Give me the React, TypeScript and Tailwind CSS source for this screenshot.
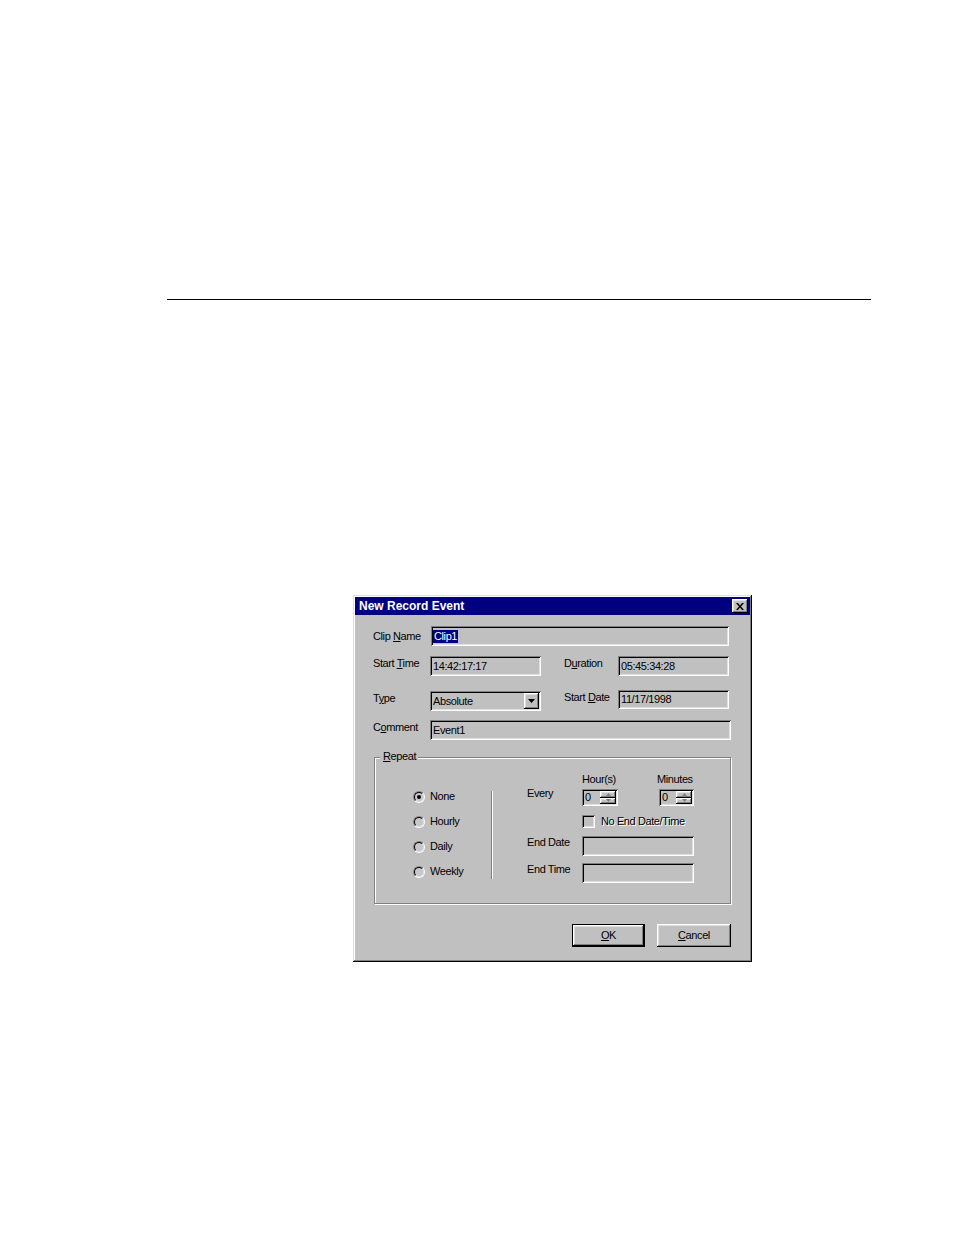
import React from "react";

const raised =
  "shadow-[inset_-1px_-1px_#000,inset_1px_1px_#fff,inset_-2px_-2px_#808080,inset_2px_2px_#dfdfdf]";
const sunken =
  "shadow-[inset_1px_1px_#808080,inset_-1px_-1px_#fff,inset_2px_2px_#000,inset_-2px_-2px_#dfdfdf]";
const lbl = "text-[11px] leading-[13px] tracking-[-0.4px] text-black whitespace-nowrap";

function Field({ className = "", children }: { className?: string; children?: React.ReactNode }) {
  return (
    <div className={`bg-[#c0c0c0] ${sunken} flex items-center pl-[3px] ${className}`}>
      <span className={lbl}>{children}</span>
    </div>
  );
}

function Radio({ checked, label }: { checked?: boolean; label: string }) {
  return (
    <div className="h-[25px] flex items-center gap-[5px]">
      <div className="w-[12px] h-[12px] rounded-full border border-t-[#808080] border-l-[#808080] border-b-white border-r-white">
        <div className="w-full h-full rounded-full border border-t-black border-l-black border-b-[#dfdfdf] border-r-[#dfdfdf] bg-[#c8c8c8] flex items-center justify-center">
          {checked && <div className="w-[4px] h-[4px] rounded-full bg-black" />}
        </div>
      </div>
      <span className={lbl}>{label}</span>
    </div>
  );
}

function Spinner({ className = "" }: { className?: string }) {
  return (
    <div className={`h-[17px] bg-[#c0c0c0] ${sunken} flex items-center pl-[3px] pr-[2px] ${className}`}>
      <span className={`${lbl} text-[#8c8c8c] flex-1`}>0</span>
      <div className="flex flex-col w-[16px] h-[13px]">
        <div className={`flex-1 bg-[#c0c0c0] ${raised} flex items-center justify-center`}>
          <svg width="5" height="3" viewBox="0 0 5 3">
            <path d="M2.5 0L5 3H0z" fill="#808080" />
          </svg>
        </div>
        <div className={`flex-1 bg-[#c0c0c0] ${raised} flex items-center justify-center`}>
          <svg width="5" height="3" viewBox="0 0 5 3">
            <path d="M0 0h5L2.5 3z" fill="#808080" />
          </svg>
        </div>
      </div>
    </div>
  );
}

export default function App() {
  return (
    <div className="w-[954px] h-[1235px] bg-white overflow-hidden font-['Liberation_Sans',Arial,sans-serif]">
      <div className="pt-[299px] pl-[167px]">
        <div className="w-[704px] h-px bg-black" />
      </div>

      <div className="ml-[353px] mt-[295px] w-[399px] h-[367px] bg-[#c0c0c0] p-[2px] shadow-[inset_-1px_-1px_#000,inset_1px_1px_#dfdfdf,inset_-2px_-2px_#808080,inset_2px_2px_#fff] flex flex-col">
        {/* Title bar */}
        <div className="h-[18px] bg-[#000080] flex items-center justify-between pl-[4px] pr-[2px]">
          <span className="text-white text-[12px] font-bold leading-none">New Record Event</span>
          <div className={`w-[16px] h-[14px] bg-[#c0c0c0] ${raised} flex items-center justify-center`}>
            <svg width="8" height="7" viewBox="0 0 8 7">
              <path d="M0 0h2l2 2.4L6 0h2L5 3.5 8 7H6L4 4.6 2 7H0l3-3.5z" fill="#000" />
            </svg>
          </div>
        </div>

        <div className="pl-[18px]">
          {/* Row 1 */}
          <div className="mt-[11px] flex h-[20px]">
            <div className={`${lbl} w-[58px] pt-[4px]`}>
              Clip <u>N</u>ame
            </div>
            <div className={`w-[298px] h-[20px] bg-[#c0c0c0] ${sunken} flex items-center pl-[2px]`}>
              <span className={`${lbl} bg-[#000080] text-white px-[1px]`}>Clip1</span>
            </div>
          </div>

          {/* Row 2 */}
          <div className="mt-[10px] flex h-[20px]">
            <div className={`${lbl} w-[57px] pt-[1px]`}>
              Start <u>T</u>ime
            </div>
            <Field className="w-[111px] h-[20px]">14:42:17:17</Field>
            <div className={`${lbl} ml-[23px] w-[54px] pt-[1px]`}>
              D<u>u</u>ration
            </div>
            <Field className="w-[111px] h-[20px]">05:45:34:28</Field>
          </div>

          {/* Row 3 */}
          <div className="mt-[14px] flex h-[21px]">
            <div className={`${lbl} w-[57px] pt-[2px]`}>
              T<u>y</u>pe
            </div>
            <div className={`mt-[1px] w-[111px] h-[20px] bg-[#c0c0c0] ${sunken} flex items-center pl-[3px] pr-[2px]`}>
              <span className={`${lbl} flex-1`}>Absolute</span>
              <div className={`w-[15px] h-[16px] bg-[#c0c0c0] ${raised} flex items-center justify-center`}>
                <svg width="7" height="4" viewBox="0 0 7 4">
                  <path d="M0 0h7L3.5 4z" fill="#000" />
                </svg>
              </div>
            </div>
            <div className={`${lbl} ml-[23px] w-[54px] pt-[1px] text-[10.5px]`}>
              Start <u>D</u>ate
            </div>
            <Field className="w-[111px] h-[19px]">11/17/1998</Field>
          </div>

          {/* Row 4 */}
          <div className="mt-[9px] flex h-[20px]">
            <div className={`${lbl} w-[57px] pt-[1px]`}>
              C<u>o</u>mment
            </div>
            <Field className="w-[301px] h-[20px]">Event1</Field>
          </div>

          {/* Repeat group */}
          <div className="relative mt-[17px] ml-[1px] w-[357px] h-[147px] border border-[#808080] shadow-[inset_1px_1px_#fff,1px_1px_#fff] flex items-start">
            <span className={`${lbl} absolute left-[5px] top-[-8px] pl-[3px] pr-[2px] bg-[#c0c0c0]`}>
              <u>R</u>epeat
            </span>

            <div className="ml-[38px] mt-[26px] w-[78px] flex flex-col">
              <Radio checked label="None" />
              <Radio label="Hourly" />
              <Radio label="Daily" />
              <Radio label="Weekly" />
            </div>

            <div className="mt-[33px] w-[2px] h-[88px] border-l border-l-[#808080] border-r border-r-white" />

            <div className="ml-[34px] mt-[15px] flex flex-col">
              <div className="flex h-[13px]">
                <div className="w-[55px]" />
                <div className={`${lbl} w-[75px]`}>Hour(s)</div>
                <div className={lbl}>Minutes</div>
              </div>
              <div className="mt-[1px] flex h-[19px]">
                <div className={`${lbl} w-[55px]`}>Every</div>
                <Spinner className="w-[36px] mt-[2px]" />
                <Spinner className="w-[35px] mt-[2px] ml-[41px]" />
              </div>
              <div className="mt-[9px] flex h-[13px] items-center">
                <div className="w-[55px]" />
                <div className={`w-[13px] h-[13px] bg-[#c0c0c0] ${sunken}`} />
                <span className={`${lbl} ml-[6px] text-[#8a8a8a] [text-shadow:1px_1px_0_#fff]`}>
                  No End Date/Time
                </span>
              </div>
              <div className="mt-[8px] flex h-[20px]">
                <div className={`${lbl} w-[55px]`}>End Date</div>
                <Field className="w-[112px] h-[20px]" />
              </div>
              <div className="mt-[7px] flex h-[20px]">
                <div className={`${lbl} w-[55px]`}>End Time</div>
                <Field className="w-[112px] h-[20px]" />
              </div>
            </div>
          </div>
        </div>

        {/* Buttons */}
        <div className="mt-[20px] flex justify-end gap-[12px] pr-[19px]">
          <div className="w-[73px] h-[23px] border border-black">
            <div className={`w-full h-full bg-[#c0c0c0] ${raised} flex items-center justify-center`}>
              <span className={lbl}>
                <u>O</u>K
              </span>
            </div>
          </div>
          <div className={`w-[74px] h-[23px] bg-[#c0c0c0] ${raised} flex items-center justify-center`}>
            <span className={lbl}>
              <u>C</u>ancel
            </span>
          </div>
        </div>
      </div>
    </div>
  );
}
